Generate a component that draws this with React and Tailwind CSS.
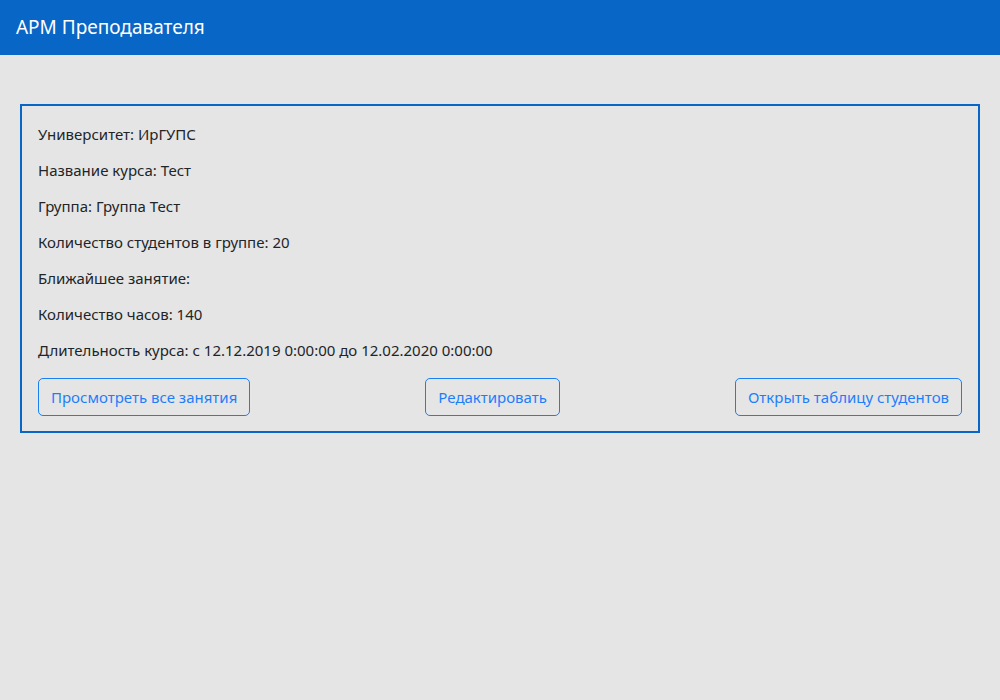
import React from 'react';

const info = [
    'Университет: ИрГУПС',
    'Название курса: Тест',
    'Группа: Группа Тест',
    'Количество студентов в группе: 20',
    'Ближайшее занятие:',
    'Количество часов: 140',
    'Длительность курса: с 12.12.2019 0:00:00 до 12.02.2020 0:00:00',
];

const buttons = ['Просмотреть все занятия', 'Редактировать', 'Открыть таблицу студентов'];

const App = () => {
    return (
        <div className="min-h-[700px] bg-[#e5e5e5] text-[#212529]" style={{ fontFamily: '"Noto Sans", "Open Sans", sans-serif' }}>
            {/* header */}
            <div className="h-[55px] bg-[#0866c6] flex items-center px-4">
                <span className="text-white text-[19px]">АРМ Преподавателя</span>
            </div>

            <div className="px-5 pt-[49px]">
                <div className="border-2 border-[#0866c6] px-4 pt-4 pb-[15px]">
                    <div className="flex flex-col gap-3">
                        {info.map(line => (
                            <p key={line} className="text-[15px] leading-6">{line}</p>
                        ))}
                    </div>
                    <div className="flex justify-between mt-4">
                        {buttons.map(label => (
                            <button
                                key={label}
                                className="h-[38px] px-3 border border-[#1a7ff0] rounded-[5px] text-[#1e7efa] text-[15px] leading-6"
                            >
                                {label}
                            </button>
                        ))}
                    </div>
                </div>
            </div>
        </div>
    );
};

export default App;
